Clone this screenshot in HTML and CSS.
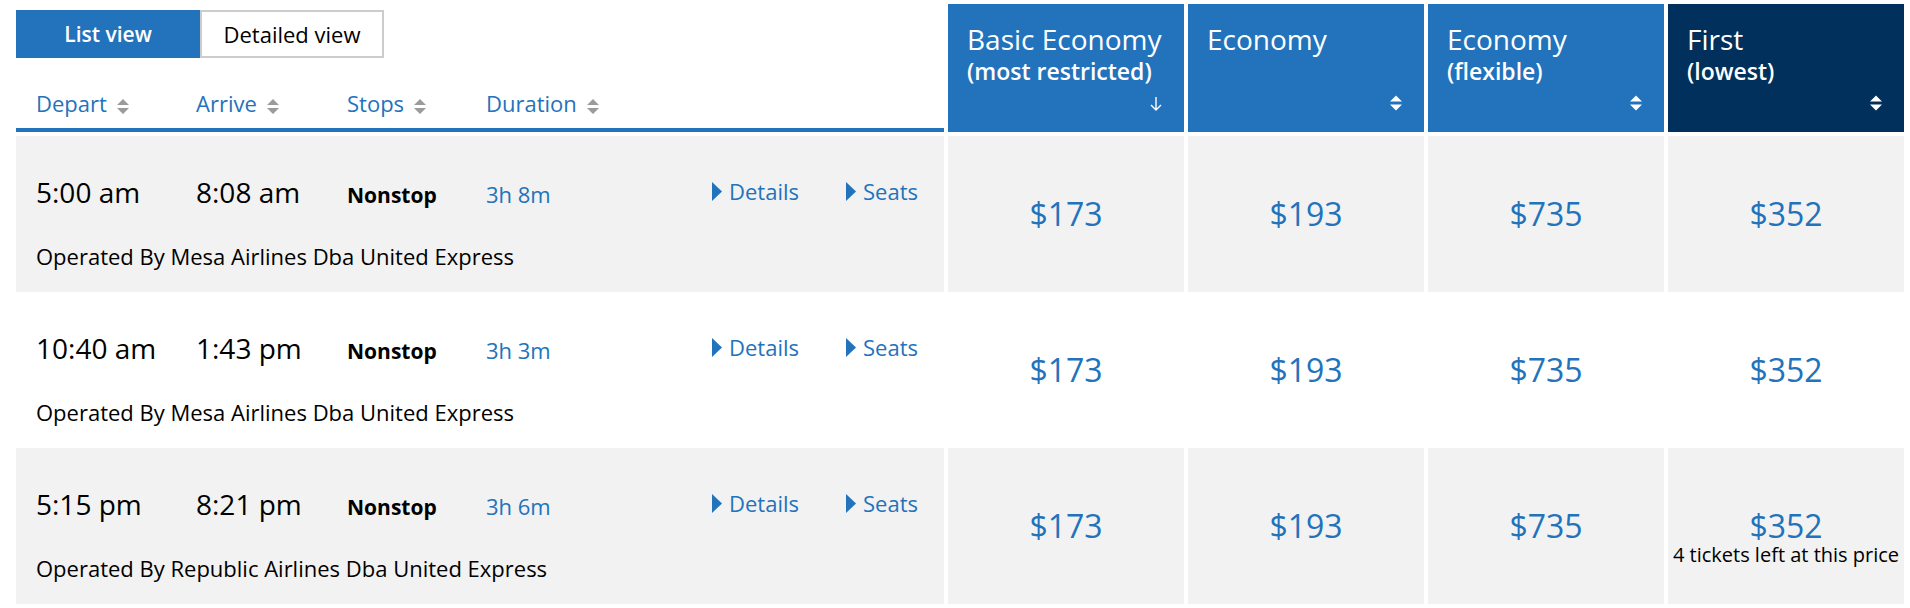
FILE: index.html
```html
<!DOCTYPE html>
<html>
<head>
<meta charset="utf-8">
<link rel="stylesheet" href="styles.css">
</head>
<body>
<div class="page">
  <div class="frow head">
    <div class="left-head">
      <div class="toggle">
        <span class="tog active">List view</span>
        <span class="tog">Detailed view</span>
      </div>
      <div class="cols">
        <span class="col-label">Depart<svg class="sort-g" width="12" height="17" viewBox="0 0 12 17"><path d="M0 7 6 1 12 7Z M0 10 12 10 6 16Z"/></svg></span>
        <span class="col-label">Arrive<svg class="sort-g" width="12" height="17" viewBox="0 0 12 17"><path d="M0 7 6 1 12 7Z M0 10 12 10 6 16Z"/></svg></span>
        <span class="col-label">Stops<svg class="sort-g" width="12" height="17" viewBox="0 0 12 17"><path d="M0 7 6 1 12 7Z M0 10 12 10 6 16Z"/></svg></span>
        <span class="col-label">Duration<svg class="sort-g" width="12" height="17" viewBox="0 0 12 17"><path d="M0 7 6 1 12 7Z M0 10 12 10 6 16Z"/></svg></span>
      </div>
    </div>
    <div class="fare-head">
      <div class="fh-title">Basic Economy</div>
      <div class="fh-sub">(most restricted)</div>
      <div class="fh-icon arrow"><svg width="12" height="14" viewBox="0 0 12 14"><path d="M6 0V13M1 8l5 5 5-5" stroke="#fff" stroke-width="1.4" fill="none"/></svg></div>
    </div>
    <div class="fare-head">
      <div class="fh-title">Economy</div>
      <div class="fh-icon"><svg class="sort-w" width="12" height="16" viewBox="0 0 12 16"><path d="M0 6.5 6 0.5 12 6.5Z M0 9.5 12 9.5 6 15.5Z"/></svg></div>
    </div>
    <div class="fare-head">
      <div class="fh-title">Economy</div>
      <div class="fh-sub">(flexible)</div>
      <div class="fh-icon"><svg class="sort-w" width="12" height="16" viewBox="0 0 12 16"><path d="M0 6.5 6 0.5 12 6.5Z M0 9.5 12 9.5 6 15.5Z"/></svg></div>
    </div>
    <div class="fare-head first">
      <div class="fh-title">First</div>
      <div class="fh-sub">(lowest)</div>
      <div class="fh-icon"><svg class="sort-w" width="12" height="16" viewBox="0 0 12 16"><path d="M0 6.5 6 0.5 12 6.5Z M0 9.5 12 9.5 6 15.5Z"/></svg></div>
    </div>
  </div>

  <div class="rows">
    <div class="frow flight">
      <div class="cell info">
        <div class="line1">
          <span class="time">5:00 am</span>
          <span class="time">8:08 am</span>
          <span class="stops">Nonstop</span>
          <span class="dur">3h 8m</span>
          <span class="link"><svg class="tri" width="10" height="19" viewBox="0 0 10 19"><path d="M0 0 10 9.5 0 19Z"/></svg>Details</span>
          <span class="link"><svg class="tri" width="10" height="19" viewBox="0 0 10 19"><path d="M0 0 10 9.5 0 19Z"/></svg>Seats</span>
        </div>
        <div class="operated">Operated By Mesa Airlines Dba United Express</div>
      </div>
      <div class="cell price"><span class="amt">$173</span></div>
      <div class="cell price"><span class="amt">$193</span></div>
      <div class="cell price"><span class="amt">$735</span></div>
      <div class="cell price"><span class="amt">$352</span></div>
    </div>

    <div class="frow flight">
      <div class="cell info">
        <div class="line1">
          <span class="time">10:40 am</span>
          <span class="time">1:43 pm</span>
          <span class="stops">Nonstop</span>
          <span class="dur">3h 3m</span>
          <span class="link"><svg class="tri" width="10" height="19" viewBox="0 0 10 19"><path d="M0 0 10 9.5 0 19Z"/></svg>Details</span>
          <span class="link"><svg class="tri" width="10" height="19" viewBox="0 0 10 19"><path d="M0 0 10 9.5 0 19Z"/></svg>Seats</span>
        </div>
        <div class="operated">Operated By Mesa Airlines Dba United Express</div>
      </div>
      <div class="cell price"><span class="amt">$173</span></div>
      <div class="cell price"><span class="amt">$193</span></div>
      <div class="cell price"><span class="amt">$735</span></div>
      <div class="cell price"><span class="amt">$352</span></div>
    </div>

    <div class="frow flight">
      <div class="cell info">
        <div class="line1">
          <span class="time">5:15 pm</span>
          <span class="time">8:21 pm</span>
          <span class="stops">Nonstop</span>
          <span class="dur">3h 6m</span>
          <span class="link"><svg class="tri" width="10" height="19" viewBox="0 0 10 19"><path d="M0 0 10 9.5 0 19Z"/></svg>Details</span>
          <span class="link"><svg class="tri" width="10" height="19" viewBox="0 0 10 19"><path d="M0 0 10 9.5 0 19Z"/></svg>Seats</span>
        </div>
        <div class="operated">Operated By Republic Airlines Dba United Express</div>
      </div>
      <div class="cell price"><span class="amt">$173</span></div>
      <div class="cell price"><span class="amt">$193</span></div>
      <div class="cell price"><span class="amt">$735</span></div>
      <div class="cell price"><span class="amt">$352</span><span class="left-note">4 tickets left at this price</span></div>
    </div>
  </div>
</div>
</body>
</html>
```

FILE: styles.css
```css
* { box-sizing: border-box; }

body {
  margin: 0;
  background: #fff;
  font-family: "Open Sans", "Noto Sans", sans-serif;
  color: #000;
}

.page {
  padding: 4px 0 0 16px;
}

.frow {
  display: grid;
  grid-template-columns: 928px repeat(4, 236px);
  column-gap: 4px;
}

/* ---------- header ---------- */
.head {
  height: 128px;
}

.left-head {
  display: flex;
  flex-direction: column;
  padding-top: 6px;
  border-bottom: 4px solid #2372bc;
}

.toggle {
  display: flex;
  height: 48px;
}

.tog {
  width: 184px;
  height: 48px;
  display: flex;
  align-items: center;
  justify-content: center;
  font-size: 22px;
  border: 2px solid #cccccc;
  background: #fff;
  color: #000;
}

.tog.active {
  background: #2372bc;
  border-color: #2372bc;
  color: #fff;
  font-weight: 600;
  font-size: 21px;
}

.cols {
  margin-top: auto;
  margin-bottom: 10px;
  padding-left: 20px;
  display: grid;
  grid-template-columns: 160px 151px 139px auto;
  font-size: 22px;
  line-height: 30px;
  color: #2372bc;
}

.sort-g {
  fill: #9b9b9b;
  margin-left: 10px;
  vertical-align: -3px;
}

.fare-head {
  background: #2372bc;
  color: #fff;
  display: flex;
  flex-direction: column;
  padding: 18px 22px 21px 19px;
}

.fare-head.first {
  background: #00305b;
}

.fh-title {
  font-size: 28px;
  line-height: 34px;
}

.fh-sub {
  font-size: 23px;
  line-height: 30px;
  font-weight: 600;
}

.fh-icon {
  margin-top: auto;
  align-self: flex-end;
  height: 16px;
  display: flex;
  align-items: flex-end;
}

.fh-icon.arrow {
  height: 18px;
}

.sort-w {
  fill: #fff;
  display: block;
}

/* ---------- rows ---------- */
.rows {
  margin-top: 4px;
}

.flight {
  height: 156px;
}

.flight:nth-child(odd) .cell {
  background: #f2f2f2;
}

.info {
  padding: 38px 0 0 20px;
}

.line1 {
  display: grid;
  grid-template-columns: 160px 151px 139px 226px 134px auto;
  grid-template-rows: 37px;
  align-items: baseline;
}

.time {
  font-size: 28px;
  line-height: 36px;
}

.stops {
  font-size: 21px;
  line-height: 36px;
  font-weight: 700;
}

.dur {
  font-size: 22px;
  line-height: 36px;
  color: #2372bc;
}

.link {
  align-self: start;
  margin-top: 2px;
  font-size: 22px;
  line-height: 30px;
  color: #2372bc;
  white-space: nowrap;
}

.tri {
  fill: #2372bc;
  margin-right: 7px;
  vertical-align: -1px;
}

.operated {
  margin-top: 30px;
  font-size: 22px;
  line-height: 30px;
}

.price {
  display: flex;
  flex-direction: column;
  align-items: center;
  padding-top: 61px;
}

.amt {
  font-size: 32px;
  line-height: 34px;
  color: #2372bc;
}

.left-note {
  font-size: 20px;
  line-height: 24px;
  color: #000;
  white-space: nowrap;
}
```
